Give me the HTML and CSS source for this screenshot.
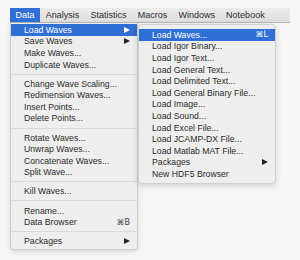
FILE: index.html
```html
<!DOCTYPE html>
<html lang="en">
<head>
    <meta charset="UTF-8">
    <title>Data Menu</title>
    <link rel="stylesheet" href="styles.css">
</head>
<body>
    <div class="menubar">
        <span class="title active">Data</span>
        <span class="title">Analysis</span>
        <span class="title">Statistics</span>
        <span class="title">Macros</span>
        <span class="title">Windows</span>
        <span class="title">Notebook</span>
    </div>

    <div class="menus">
        <ul class="menu main">
            <li class="item active"><span>Load Waves</span><span class="arrow"></span></li>
            <li class="item"><span>Save Waves</span><span class="arrow"></span></li>
            <li class="item"><span>Make Waves...</span></li>
            <li class="item"><span>Duplicate Waves...</span></li>
            <li class="sep"></li>
            <li class="item"><span>Change Wave Scaling...</span></li>
            <li class="item"><span>Redimension Waves...</span></li>
            <li class="item"><span>Insert Points...</span></li>
            <li class="item"><span>Delete Points...</span></li>
            <li class="sep"></li>
            <li class="item"><span>Rotate Waves...</span></li>
            <li class="item"><span>Unwrap Waves...</span></li>
            <li class="item"><span>Concatenate Waves...</span></li>
            <li class="item"><span>Split Wave...</span></li>
            <li class="sep"></li>
            <li class="item"><span>Kill Waves...</span></li>
            <li class="sep"></li>
            <li class="item"><span>Rename...</span></li>
            <li class="item"><span>Data Browser</span><span class="key">⌘B</span></li>
            <li class="sep"></li>
            <li class="item"><span>Packages</span><span class="arrow"></span></li>
        </ul>

        <ul class="menu sub">
            <li class="item active"><span>Load Waves...</span><span class="key">⌘L</span></li>
            <li class="item"><span>Load Igor Binary...</span></li>
            <li class="item"><span>Load Igor Text...</span></li>
            <li class="item"><span>Load General Text...</span></li>
            <li class="item"><span>Load Delimited Text...</span></li>
            <li class="item"><span>Load General Binary File...</span></li>
            <li class="item"><span>Load Image...</span></li>
            <li class="item"><span>Load Sound...</span></li>
            <li class="item"><span>Load Excel File...</span></li>
            <li class="item"><span>Load JCAMP-DX File...</span></li>
            <li class="item"><span>Load Matlab MAT File...</span></li>
            <li class="item"><span>Packages</span><span class="arrow"></span></li>
            <li class="item"><span>New HDF5 Browser</span></li>
        </ul>
    </div>
</body>
</html>
```

FILE: styles.css
```css
* {
    margin: 0;
    padding: 0;
    box-sizing: border-box;
}

body {
    font-family: 'Liberation Sans', Arial, sans-serif;
    background: #f6f6f6;
    color: #2b2b2b;
    padding: 8px 10px;
}

/* menu bar */
.menubar {
    display: flex;
    width: 280px;
    height: 15px;
    background: linear-gradient(#ebebeb, #dedede);
    border-bottom: 1px solid #b4b4b4;
    font-size: 9px;
}

.title {
    padding: 0 5.6px;
    line-height: 14px;
}

.title.active {
    background: #306fd6;
    color: white;
}

/* dropdowns */
.menus {
    display: flex;
    align-items: flex-start;
}

.menu {
    list-style: none;
    background: #eeeeee;
    border: 1px solid #d0d0d0;
    font-size: 8.7px;
}

.main {
    width: 128px;
    border-top: none;
    border-radius: 0 0 4px 4px;
    padding: 1px 0 2px;
    box-shadow: 0 2px 5px rgba(0,0,0,0.12);
}

.sub {
    width: 138px;
    margin-top: 1px;
    border-radius: 4px;
    padding: 4px 0 3px;
    box-shadow: 0 2px 6px rgba(0,0,0,0.15);
}

.item {
    display: flex;
    align-items: center;
    justify-content: space-between;
    height: 11.6px;
    padding: 0 7px 0 13px;
    white-space: nowrap;
}

.item.active {
    background: #306fd6;
    color: white;
}

.sep {
    height: 7.5px;
    display: flex;
    align-items: center;
}

.sep::after {
    content: '';
    flex: 1;
    height: 1px;
    background: #d9d9d9;
}

.arrow {
    width: 0;
    height: 0;
    border-top: 3px solid transparent;
    border-bottom: 3px solid transparent;
    border-left: 6px solid #222;
}

.item.active .arrow {
    border-left-color: white;
}

.key {
    font-family: 'DejaVu Sans', sans-serif;
    font-size: 8px;
    color: #444;
}

.item.active .key {
    color: white;
}
```
